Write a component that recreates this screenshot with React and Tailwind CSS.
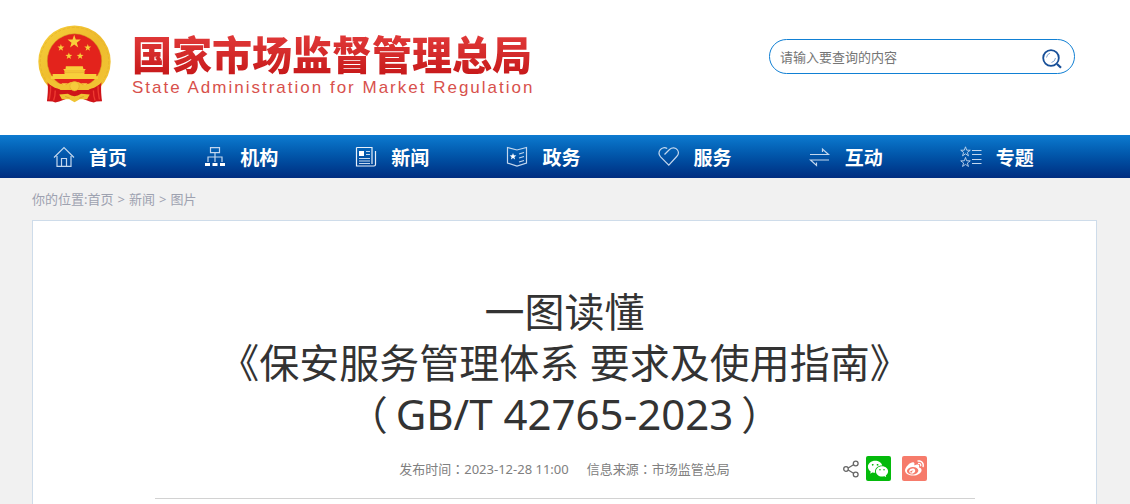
import React from "react";
import { RiWechatFill } from "react-icons/ri";
import { FaWeibo } from "react-icons/fa";

const star = (cx, cy, r) => {
  const pts = [];
  for (let i = 0; i < 10; i++) {
    const d = i % 2 === 0 ? r : r * 0.4;
    const a = (Math.PI / 5) * i - Math.PI / 2;
    pts.push(`${(cx + d * Math.cos(a)).toFixed(2)},${(cy + d * Math.sin(a)).toFixed(2)}`);
  }
  return pts.join(" ");
};

function Emblem() {
  return (
    <svg viewBox="24 29 220 234" className="w-[73px] h-[78px] shrink-0" aria-hidden="true">
      <defs>
        <linearGradient id="gold" x1="0" y1="0" x2="1" y2="1">
          <stop offset="0" stopColor="#f6cf3c" />
          <stop offset="0.5" stopColor="#eebb2c" />
          <stop offset="1" stopColor="#f3c636" />
        </linearGradient>
      </defs>
      <ellipse cx="134" cy="139" rx="109" ry="109" fill="url(#gold)" />
      <ellipse cx="134" cy="139" rx="103" ry="103" fill="none" stroke="#e3af2a" strokeWidth="2" strokeDasharray="9 5" />
      <circle cx="134" cy="137" r="82" fill="#e3231c" stroke="#d09a22" strokeWidth="1.5" />
      <g fill="#f8cf3a">
        <polygon points={star(133, 79, 21)} />
        <polygon points={star(93, 97, 11)} />
        <polygon points={star(174, 97, 11)} />
        <polygon points={star(117, 122, 11)} />
        <polygon points={star(151, 122, 11)} />
        <path d="M108 153h51l2 8h7l-4 6v9h36v7h5v8H63v-8h5v-7h36v-9l-4-6h7z" />
      </g>
      <path d="M104 167h60M104 172h60" stroke="#e9ac30" strokeWidth="2" />
      {/* ribbon hanging over the lower half of the ring */}
      <path d="M52 194c3 22 2 38-1 64l17 1 8 3 12-3 22-8h48l22 8 12 3 8-3 17-1c-3-26-4-42-1-64l-40 30H92z" fill="#cf1419" />
      <path d="M62 213c1 16-2 28-4 40M76 226c0 14-2 22-5 30M205 213c-1 16 2 28 4 40M191 226c0 14 2 22 5 30" stroke="#ee3b30" strokeWidth="4" fill="none" />
      {/* wheat swags, knot and gear */}
      <path d="M50 182c16 18 38 26 60 25 14-10 34-10 48 0 22 1 44-7 60-25l3 14c-16 20-38 28-60 28-16-9-38-9-54 0-22 0-44-8-60-28z" fill="#f1c232" />
      <path d="M94 204h80l-8 6q-15-9-32-9t-32 9z" fill="#f7cf42" />
      <circle cx="134" cy="213" r="14" fill="#f6cb3c" stroke="#dfa42b" strokeWidth="1.5" />
      <path d="M88 238l26-2q20 14 40 0l26 2-8 14h-22l-16 9-16-9H96z" fill="#efc333" />
      <path d="M106 244l14 5M162 244l-14 5" stroke="#d9972a" strokeWidth="2.5" />
    </svg>
  );
}

function Icon({ children }) {
  return (
    <svg viewBox="0 0 22 22" className="w-[22px] h-[22px] shrink-0" fill="none" stroke="#c3d7ee" strokeWidth="1.2" aria-hidden="true">
      {children}
    </svg>
  );
}

const menu = [
  {
    name: "首页",
    icon: <path d="M1 11.5 11 1.5l10 10M4 10v10.4h14V10M8.5 20.4v-7.9h5v7.9" />,
  },
  {
    name: "机构",
    icon: (
      <>
        <path d="M6.5 1.6h9v5h-9zM11 6.6V11M4 16v-5h14v5M11 11v5" />
        <path d="M1 17h5v3H1zM8.5 17h5v3h-5zM16 17h5v3h-5z" fill="#fff" stroke="none" />
      </>
    ),
  },
  {
    name: "新闻",
    icon: (
      <>
        <path d="M1.5 1.5h15.5v16.5M1.5 1.5v18.5h17.500q1.500 0 1.500-1.500V5" stroke="#e8f0fa" />
        <path d="M11 5.5h4M11 8.5h4M4 12.5h11M4 15h11M4 17.5h11" />
        <path d="M4 5h5v5H4z" fill="#fff" stroke="none" />
      </>
    ),
  },
  {
    name: "政务",
    icon: (
      <>
        <path d="M1.5 1.5 11 4l9.5-2.5v15.500L11 20 1.500 17z" />
        <path d="M13 8l5-1.5M13 12l5-1.5M13 16l5-1.5" />
        <polygon points={star(7, 10.5, 3.6)} fill="#fff" stroke="none" />
      </>
    ),
  },
  {
    name: "服务",
    icon: <path d="M6.5 8.5 11.5 3.5C14 1.2 17.7 1.3 19.5 4c1.5 2.3.9 4.8-.8 6.5L10.8 19.2 2.6 10.8C.8 8.8.7 5.8 2.3 3.7 4 1.5 7 1.2 9.2 2.5" />,
  },
  {
    name: "互动",
    icon: <path d="M1 8.5h18.500L13.500 3v3M20 14H1.500l6 5.500v-3" />,
  },
  {
    name: "专题",
    icon: (
      <>
        <polygon points={star(5.5, 5.8, 5)} strokeWidth="0.9" />
        <polygon points={star(5.5, 16.4, 5)} strokeWidth="0.9" />
        <path d="M12 4.5h9.5M12 8.5h9.5M12 13.5h9.5M12 17.5h9.5" />
      </>
    ),
  },
];

function Header() {
  return (
    <header className="flex items-start justify-between pt-[25px] pb-8 pl-[38px] pr-[55px]">
      <a href="#" className="flex items-start gap-[21px]">
        <Emblem />
        <div className="pt-[7px]">
          <div className="text-[40px] leading-[45px] font-extrabold whitespace-nowrap text-transparent bg-clip-text bg-linear-to-b from-[#e23a3a] to-[#c61618]">
            国家市场监督管理总局
          </div>
          <div className="font-['Liberation_Sans',sans-serif] text-[17px] leading-[22px] tracking-[2px] whitespace-nowrap text-[#d8514c]">
            State Administration for Market Regulation
          </div>
        </div>
      </a>
      <form className="mt-[14px] flex items-center w-[306px] h-[35px] pl-[10px] pr-3 rounded-full border border-[#1180d4]" onSubmit={(e) => e.preventDefault()}>
        <input
          type="text"
          aria-label="搜索"
          placeholder="请输入要查询的内容"
          className="flex-1 min-w-0 h-full bg-transparent outline-none text-[13px] placeholder:text-[#757575]"
        />
        <button type="submit" aria-label="查询" className="pt-1">
          <svg viewBox="0 0 20 20" className="w-5 h-5" fill="none" stroke="#174f98">
            <circle cx="9" cy="9" r="7.8" strokeWidth="1.8" />
            <path d="M15 15l4 3.8" strokeWidth="2.2" />
            <path d="M4.5 8.5Q5 5 8 4.3M9.5 13.5q3.5-.8 4-4.5" stroke="#7fa3cf" />
          </svg>
        </button>
      </form>
    </header>
  );
}

function Share() {
  return (
    <div className="flex items-center justify-end pr-12">
      <a href="#" aria-label="分享">
        <svg viewBox="0 0 16 18" className="w-4 h-[18px]" fill="none" stroke="#666" strokeWidth="1.3">
          <circle cx="3" cy="9" r="2.3" />
          <circle cx="12.7" cy="3.5" r="2.4" />
          <circle cx="12.7" cy="14.5" r="2.4" />
          <path d="M5.2 8l5.3-3.2M5.2 10l5.3 3.2" />
        </svg>
      </a>
      <a href="#" aria-label="微信" className="ml-[7px] flex items-center justify-center w-[25px] h-[25px] rounded-xs bg-[#04ba0c] text-white">
        <RiWechatFill size={22} />
      </a>
      <a href="#" aria-label="微博" className="ml-[11px] flex items-center justify-center w-[25px] h-[25px] rounded-xs bg-[#f67b6b] text-white">
        <FaWeibo size={19} />
      </a>
    </div>
  );
}

function App() {
  return (
    <div className="flex flex-col min-h-screen bg-[#f1f1f1] font-['Noto_Sans','Noto_Sans_CJK_SC',sans-serif]">
      <div className="bg-white">
        <Header />
      </div>
      <nav className="grid grid-cols-7 h-[43px] pl-8 pr-10 bg-linear-to-b from-[#0e7bd0] to-[#012d80]">
        {menu.map((item) => (
          <a key={item.name} href="#" className="flex items-center gap-[14px] pl-[21px] text-[19px] font-bold text-white">
            <Icon>{item.icon}</Icon>
            <span className="pt-1">{item.name}</span>
          </a>
        ))}
      </nav>
      <div className="flex items-center gap-1 h-[42px] px-8 pt-[2px] text-[13px] text-[#9ea2b0]">
        <span>你的位置:<a href="#">首页</a></span>
        <span>&gt;</span>
        <a href="#">新闻</a>
        <span>&gt;</span>
        <a href="#">图片</a>
      </div>
      <main className="flex-1 ml-8 mr-[33px] pt-[65px] bg-white border border-b-0 border-[#cedcea]">
        <h1 className="text-center text-[40px] leading-[51px] text-[#333]">
          一图读懂
          <br />
          《保安服务管理体系 要求及使用指南》
          <br />
          （<span className="px-2 text-[42px]">GB/T 42765-2023</span>）
        </h1>
        <div className="mx-auto max-w-[820px] mt-4 pb-[17px] grid grid-cols-[1fr_auto_1fr] items-center border-b border-[#d2d2d2]">
          <div />
          <div className="flex gap-[18px] pt-[2px] text-[13px] text-[#808080]">
            <span>发布时间<span className="font-['Noto_Sans_CJK_TC',sans-serif]">：</span>2023-12-28 11:00</span>
            <span>信息来源<span className="font-['Noto_Sans_CJK_TC',sans-serif]">：</span>市场监管总局</span>
          </div>
          <Share />
        </div>
      </main>
    </div>
  );
}

export default App;
